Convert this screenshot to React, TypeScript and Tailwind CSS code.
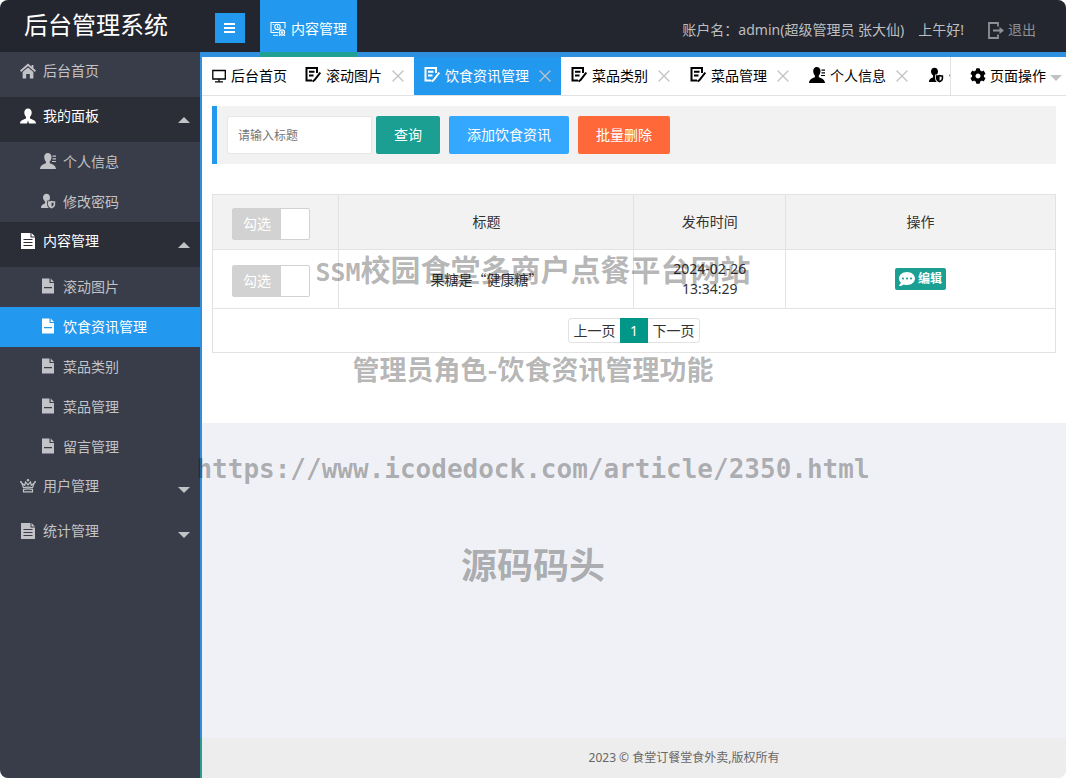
import type { ComponentType } from "react";
import { X } from "lucide-react";
import { FaCog, FaCommentDots } from "react-icons/fa";

type IconProps = { className?: string };

const HomeIcon = ({ className }: IconProps) => (
  <svg viewBox="0 0 16 16" fill="currentColor" className={className}>
    <path d="M8 0.4 0 7.6l1.2 1.3L8 3l6.800 5.900L16 7.600 13.400 5.200V2h-1.800v1.700z" />
    <path d="M2.600 9.100 8 4.500l5.400 4.600V15.500H9.800V11H6.200v4.500H2.600z" />
  </svg>
);

const PersonIcon = ({ className }: IconProps) => (
  <svg viewBox="0 0 16 16" fill="currentColor" className={className}>
    <path d="M8 .4c2.300 0 3.700 1.700 3.700 4 0 1.900-.8 3.400-1.700 4.400v1.700c1 .6 6 1.600 6 5H9l-1-3-1 3H0c0-3.400 5-4.400 6-5V8.800C5.100 7.800 4.300 6.300 4.300 4.400c0-2.300 1.400-4 3.700-4z" />
  </svg>
);

const ProfileIcon = ({ className }: IconProps) => (
  <svg viewBox="0 0 16 16" fill="currentColor" className={className}>
    <path d="M7.800 0c2.400 0 3.700 1.700 3.700 4.100 0 1.900-.8 3.500-1.700 4.500v1.600c1.100.7 6.200 1.700 6.200 5.800H0c0-4.100 4.800-5.100 5.900-5.800V8.600C5 7.600 4.200 6 4.200 4.100 4.200 1.700 5.500 0 7.800 0z" />
    <path d="M12.500 2.500H16v1.200h-3.500zM12.500 5.200H16v1.200h-3.500zM12 7.900h4v1.200h-4z" />
  </svg>
);

const PersonShieldIcon = ({ className }: IconProps) => (
  <svg viewBox="0 0 16 16" fill="currentColor" className={className}>
    <path d="M6.500.8c2.100 0 3.500 1.500 3.500 3.700 0 1.200-.4 2.200-1 3H7.200v4c0 1.500.6 2.500 1.600 3.400H1c0-3.400 3.100-4 4.100-4.700V8.500C4 7.600 3 6.200 3 4.500 3 2.300 4.400.8 6.500.8z" />
    <path
      fillRule="evenodd"
      d="M8 8.200c1.400 0 2.600-.1 3.600-.5 1 .4 2.200.5 3.600.5v3.300c0 2-1.500 3.200-3.600 4-2.100-.8-3.600-2-3.600-4zm3.600 1.300v4.200c1.200-.5 2-1.200 2-2.200V9.800c-.8 0-1.400-.1-2-.3z"
    />
  </svg>
);

const DocIcon = ({ className }: IconProps) => (
  <svg viewBox="0 0 16 16" fill="currentColor" className={className}>
    <path fillRule="evenodd" d="M2 .5h7.500V5H14v10.500H2zM4 9v1.200h8V9z" />
    <path d="M10.700.5 14 3.900h-3.300z" />
  </svg>
);

const DocLinesIcon = ({ className }: IconProps) => (
  <svg viewBox="0 0 16 16" fill="currentColor" className={className}>
    <path fillRule="evenodd" d="M1 0h9.500v4.500H15V16H1zM3.500 6v1h9V6zM3.500 9v1h9V9zM3.500 12v1h9v-1z" />
    <path d="M11.500 0 15 3.500h-3.500z" />
  </svg>
);

const CrownIcon = ({ className }: IconProps) => (
  <svg viewBox="0 0 16 16" fill="none" stroke="currentColor" strokeWidth="1.200" className={className}>
    <path d="M3.500 9.800 1.800 5.200l2.900 2.100.8-3.300 2.500 2.900L10.500 4l.8 3.300 2.900-2.100-1.700 4.600c-2.800-.9-6.200-.9-9 0z" />
    <path d="M3.500 11.500c2.800-.8 6.200-.8 9 0v2.300h-9z" />
    <circle cx="8" cy="2.300" r=".7" />
    <circle cx="1" cy="3.900" r=".4" />
    <circle cx="15" cy="3.900" r=".4" />
  </svg>
);

const ScreenIcon = ({ className }: IconProps) => (
  <svg viewBox="0 0 16 16" fill="none" stroke="currentColor" strokeWidth="1.300" className={className}>
    <path d="M1.800 2.500h12.500v8.500H1.800zM8 11v2.500M4 13.800h8" />
  </svg>
);

const NoteIcon = ({ className }: IconProps) => (
  <svg viewBox="0 0 16 16" fill="none" stroke="currentColor" strokeWidth="2" className={className}>
    <path d="M12 6V1H1.500v12.500H7M4 4.800h5.500M4 8.500h4.500" />
    <path d="m15.300 5.500-5.800 7.500-2 1.500" />
  </svg>
);

const SearchScreenIcon = ({ className }: IconProps) => (
  <svg viewBox="0 0 16 16" fill="none" stroke="currentColor" strokeWidth="1.100" className={className}>
    <path d="M8.500 11.500H1V1.500h14v6M3 14.200h5M2.800 3.500h1.500M2.800 9.500h1.500" />
    <circle cx="7.500" cy="5.900" r="2.700" />
    <path d="M7.500 4.300v2l1 .8" />
    <circle cx="12" cy="11.500" r="2.600" />
    <circle cx="12" cy="11.500" r=".8" />
    <path d="m9 14.800 1-1M15 14.800l-1-1" />
  </svg>
);

const MenuIcon = ({ className }: IconProps) => (
  <svg viewBox="0 0 12 10" fill="currentColor" className={className}>
    <path d="M0 0h11v2H0zM0 4h11v2H0zM0 8h11v2H0z" />
  </svg>
);

const ExitIcon = ({ className }: IconProps) => (
  <svg viewBox="0 0 16 17" fill="none" stroke="currentColor" strokeWidth="1.800" className={className}>
    <path d="M10 4.500V1H1v15h9v-3.500M5 8.500h8" />
    <path d="M11.500 5 16 8.500 11.500 12z" fill="currentColor" stroke="none" />
  </svg>
);

const Caret = ({ up = false, className }: { up?: boolean; className?: string }) => (
  <svg viewBox="0 0 12 6" fill="currentColor" className={`h-1.5 w-3 ${className ?? ""}`}>
    <path d={up ? "M0 6 6 0l6 6z" : "M0 0h12L6 6z"} />
  </svg>
);

type MenuItem = { title: string; icon: ComponentType<IconProps>; active?: boolean };
type MenuGroup = MenuItem & { children?: MenuItem[]; collapsed?: boolean };

const menu: MenuGroup[] = [
  { title: "后台首页", icon: HomeIcon },
  {
    title: "我的面板",
    icon: PersonIcon,
    children: [
      { title: "个人信息", icon: ProfileIcon },
      { title: "修改密码", icon: PersonShieldIcon },
    ],
  },
  {
    title: "内容管理",
    icon: DocLinesIcon,
    children: [
      { title: "滚动图片", icon: DocIcon },
      { title: "饮食资讯管理", icon: DocIcon, active: true },
      { title: "菜品类别", icon: DocIcon },
      { title: "菜品管理", icon: DocIcon },
      { title: "留言管理", icon: DocIcon },
    ],
  },
  { title: "用户管理", icon: CrownIcon, collapsed: true },
  { title: "统计管理", icon: DocLinesIcon, collapsed: true },
];

const tabs: MenuItem[] = [
  { title: "滚动图片", icon: NoteIcon },
  { title: "饮食资讯管理", icon: NoteIcon, active: true },
  { title: "菜品类别", icon: NoteIcon },
  { title: "菜品管理", icon: NoteIcon },
  { title: "个人信息", icon: ProfileIcon },
  { title: "修改密码", icon: PersonShieldIcon },
];

const rows = [{ title: "果糖是“健康糖”", time: "2024-02-26 13:34:29" }];

function Header() {
  return (
    <header className="flex h-[52px] shrink-0 bg-[#23262e]">
      <h1 className="w-[200px] shrink-0 pl-6 text-2xl leading-[50px] text-white">后台管理系统</h1>
      <button
        type="button"
        aria-label="收起菜单"
        className="mt-[13px] ml-[15px] flex size-[30px] items-center justify-center bg-[#2299ee] text-white"
      >
        <MenuIcon className="h-[10px] w-3" />
      </button>
      <a href="#" className="relative ml-[15px] flex items-center gap-[5px] bg-[#2299ee] px-[10px] pt-1.5 text-white">
        <SearchScreenIcon className="size-4" />
        内容管理
        <span className="absolute inset-x-0 top-full h-[5px] bg-[#1fa093]" />
      </a>
      <div className="ml-auto flex items-center pt-2 pr-[30px] text-[#bdbec0]">
        <span>账户名：admin(超级管理员 张大仙)</span>
        <span className="ml-[14px]">上午好!</span>
        <a href="#" className="ml-6 flex items-center gap-1 text-[#8f9196]">
          <ExitIcon className="h-[17px] w-4" />
          退出
        </a>
      </div>
    </header>
  );
}

function Sidebar() {
  return (
    <nav className="w-[200px] shrink-0 bg-[#393d49] text-[#c2c3c6]">
      <ul>
        {menu.map(({ title, icon: Icon, children, collapsed }) => (
          <li key={title}>
            <a
              href="#"
              className={`flex h-[45px] items-center pr-[10px] pb-2 pl-5 ${children ? "bg-[#2b2e37] text-white" : ""}`}
            >
              <Icon className="mr-[7px] size-4" />
              {title}
              {children && <Caret up className="mt-2 ml-auto text-[#c2c3c6]" />}
              {collapsed && <Caret className="mt-2 ml-auto" />}
            </a>
            {children && (
              <ul>
                {children.map(({ title: name, icon: ChildIcon, active }) => (
                  <li key={name}>
                    <a href="#" className={`flex h-10 items-center pl-10 ${active ? "bg-[#2299ee] text-white" : ""}`}>
                      <ChildIcon className="mr-[7px] mb-0.5 size-4" />
                      {name}
                    </a>
                  </li>
                ))}
              </ul>
            )}
          </li>
        ))}
      </ul>
    </nav>
  );
}

function TabBar() {
  return (
    <div className="flex h-11 border-t-[5px] border-b border-t-[#2f90df] border-b-[#e2e2e2] bg-white text-black">
      <div className="flex min-w-0 flex-1 overflow-hidden">
        <a href="#" className="flex shrink-0 items-center gap-1 pr-2 pl-[9px]">
          <ScreenIcon className="size-4" />
          后台首页
        </a>
        {tabs.map(({ title, icon: Icon, active }) => (
          <div key={title} className={`flex shrink-0 items-center pr-1.5 pl-[10px] ${active ? "bg-[#2299ee] text-white" : ""}`}>
            <a href="#" className="flex items-center gap-[5px]">
              <Icon className="mb-0.5 size-4" />
              {title}
            </a>
            <button type="button" aria-label={`关闭${title}`} className="ml-1.5 text-[#c2c2c2]">
              <X size={20} strokeWidth={1.5} />
            </button>
          </div>
        ))}
      </div>
      <button type="button" className="flex w-[116px] shrink-0 items-center border-l border-[#e2e2e2] pl-[19px]">
        <FaCog className="mr-1 size-4" />
        页面操作
        <Caret className="mt-1 ml-1 text-[#c2c2c2]" />
      </button>
    </div>
  );
}

function CheckSwitch({ label }: { label: string }) {
  return (
    <label className="flex h-8 w-[78px] cursor-pointer rounded-xs border border-[#d2d2d2] bg-white">
      <input type="checkbox" aria-label={label} className="sr-only" />
      <span className="w-12 bg-[#d2d2d2] text-center leading-[30px] font-normal text-white">勾选</span>
    </label>
  );
}

function NewsTable() {
  return (
    <table className="mt-[30px] w-full table-fixed border-collapse text-center text-[#333]">
      <colgroup>
        <col className="w-[15%]" />
        <col className="w-[35%]" />
        <col className="w-[18%]" />
        <col className="w-[32%]" />
      </colgroup>
      <thead>
        <tr className="h-[55px] bg-[#f2f2f2]">
          <th className="border border-[#e2e2e2] pt-1 pl-[19px]">
            <CheckSwitch label="全部勾选" />
          </th>
          <th className="border border-[#e2e2e2] font-normal">标题</th>
          <th className="border border-[#e2e2e2] font-normal">发布时间</th>
          <th className="border border-[#e2e2e2] font-normal">操作</th>
        </tr>
      </thead>
      <tbody>
        {rows.map((row) => (
          <tr key={row.time} className="h-[59px]">
            <td className="border border-[#e2e2e2] pt-1 pl-[19px]">
              <CheckSwitch label={row.title} />
            </td>
            <td className="border border-[#e2e2e2] font-['Noto_Sans_CJK_SC',sans-serif]">{row.title}</td>
            <td className="border border-[#e2e2e2] px-8">{row.time}</td>
            <td className="border border-[#e2e2e2]">
              <button
                type="button"
                className="inline-flex h-[22px] items-center gap-[3px] rounded-xs bg-[#1a9f92] px-1 align-middle text-xs font-bold text-white"
              >
                <FaCommentDots className="size-4" />
                编辑
              </button>
            </td>
          </tr>
        ))}
      </tbody>
      <tfoot>
        <tr className="h-11">
          <td colSpan={4} className="border border-[#e2e2e2]">
            <div className="flex justify-center leading-[23px]">
              <a href="#" className="w-[52px] rounded-l border border-r-0 border-[#e2e2e2]">
                上一页
              </a>
              <span className="w-7 bg-[#009688] leading-[25px] text-white">1</span>
              <a href="#" className="w-[52px] rounded-r border border-l-0 border-[#e2e2e2]">
                下一页
              </a>
            </div>
          </td>
        </tr>
      </tfoot>
    </table>
  );
}

function Watermark() {
  return (
    <div className="pointer-events-none absolute inset-x-0 top-[246px] flex flex-col items-center font-['Noto_Sans_CJK_SC',sans-serif] font-bold whitespace-nowrap text-black/30">
      <p className="text-[30px] leading-[44px]">
        <span className="font-['DejaVu_Sans_Mono',monospace] text-[25px]">SSM</span>校园食堂多商户点餐平台网站
      </p>
      <p className="mt-[52px] text-[27px] leading-[44px]">管理员角色-饮食资讯管理功能</p>
      <p className="mt-14 font-['DejaVu_Sans_Mono',monospace] text-[26px] leading-[44px]">
        https://www.icodedock.com/article/2350.html
      </p>
      <p className="mt-[50px] text-4xl leading-[44px]">源码码头</p>
    </div>
  );
}

export default function App() {
  return (
    <div className="relative flex min-h-screen flex-col overflow-hidden rounded-lg bg-[#f0f1f6] font-['Noto_Sans','Noto_Sans_CJK_SC',sans-serif] text-sm">
      <Header />
      <div className="flex flex-1">
        <Sidebar />
        <main className="flex min-w-0 flex-1 flex-col">
          <div className="flex-1 border-l-2 border-[#2f90df]">
            <TabBar />
            <div className="bg-white px-[10px] pt-[10px] pb-[70px]">
              {/* Search bar */}
              <form
                className="flex border-l-[5px] border-[#2299ee] bg-[#f2f2f2] p-[10px]"
                onSubmit={(e) => e.preventDefault()}
              >
                <input
                  type="text"
                  aria-label="标题"
                  placeholder="请输入标题"
                  className="h-[38px] w-[145px] rounded-xs border border-[#e6e6e6] bg-white px-[10px] text-xs placeholder:text-[#757575]"
                />
                <button type="submit" className="ml-1 rounded-xs bg-[#1a9f92] px-[18px] text-white">
                  查询
                </button>
                <button type="button" className="ml-[9px] rounded-xs bg-[#34a8ff] px-[18px] text-white">
                  添加饮食资讯
                </button>
                <button type="button" className="ml-[9px] rounded-xs bg-[#ff6838] px-[18px] text-white">
                  批量删除
                </button>
              </form>
              <NewsTable />
            </div>
          </div>
          <footer className="border-l-2 border-[#2a9d8f] bg-[#ededed] pl-[100px] text-center text-xs leading-10 text-[#666]">
            2023 © 食堂订餐堂食外卖,版权所有
          </footer>
        </main>
      </div>
      <Watermark />
    </div>
  );
}
